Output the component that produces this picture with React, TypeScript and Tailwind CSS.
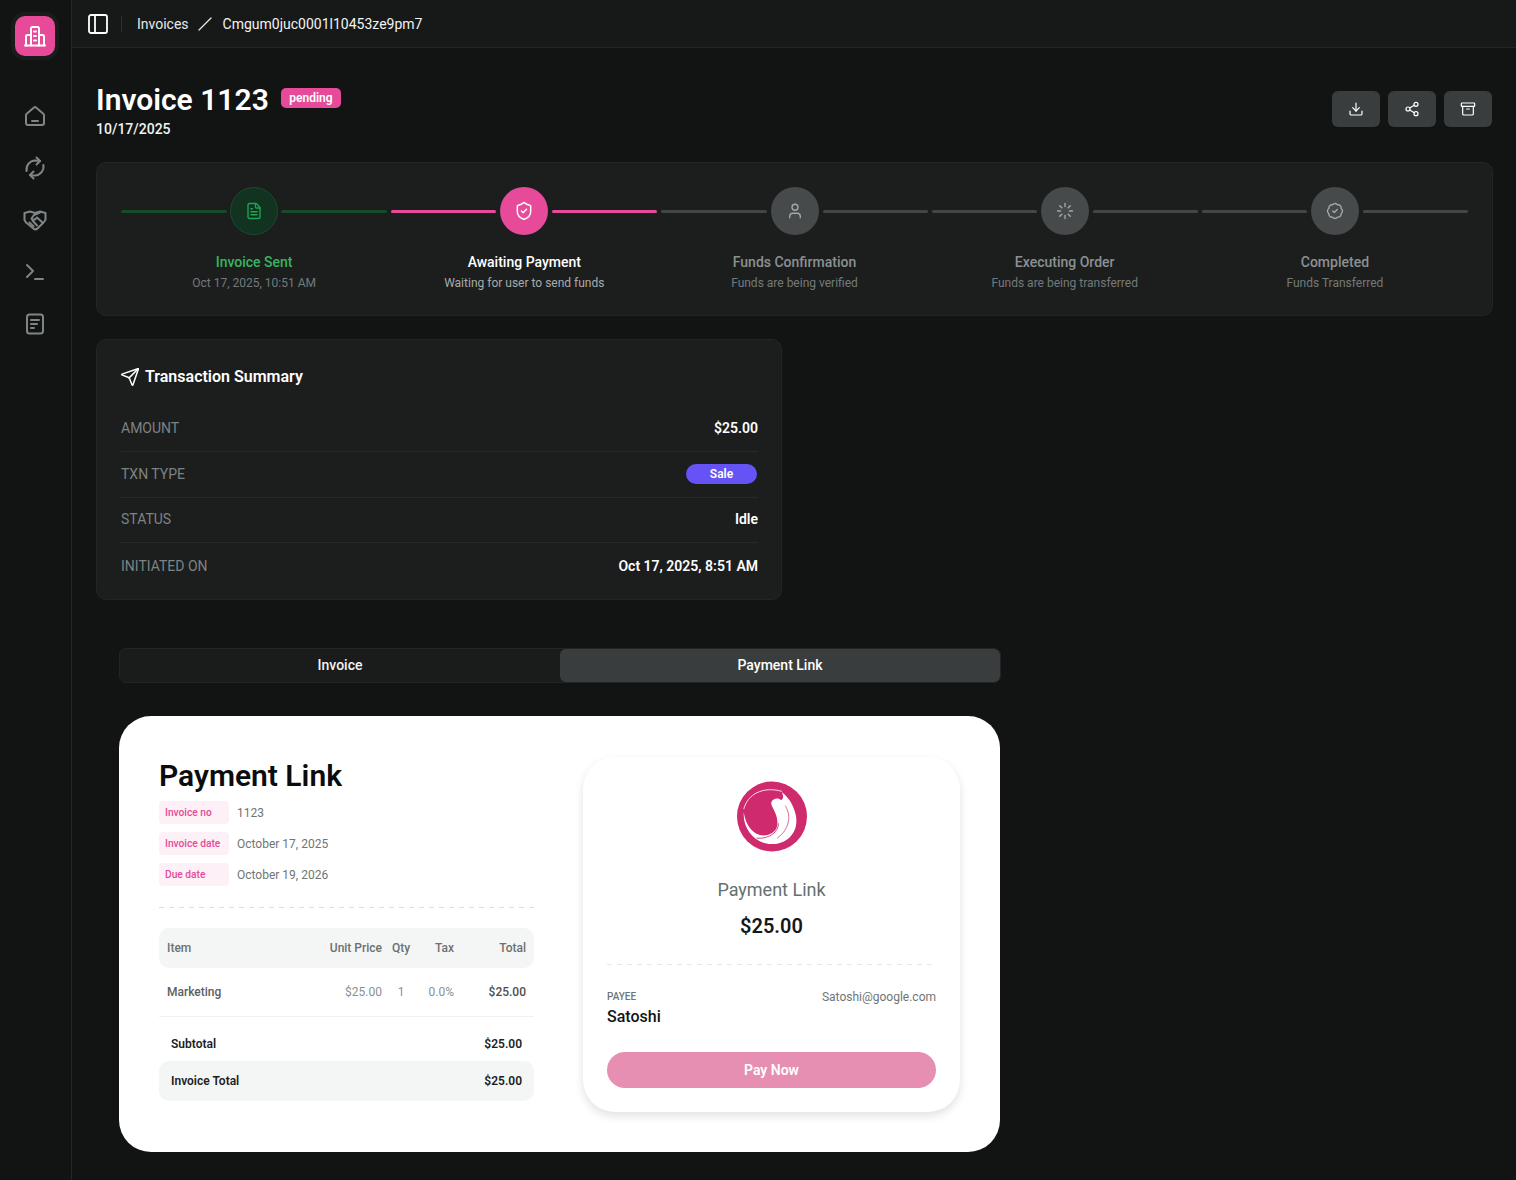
import React from 'react';
import {
  Archive,
  BadgeCheck,
  Download,
  FileText,
  Loader,
  PanelLeft,
  Send,
  Share2,
  ShieldCheck,
  Terminal,
  User,
} from 'lucide-react';

const steps = [
  { title: 'Invoice Sent', sub: 'Oct 17, 2025, 10:51 AM', state: 'done', icon: FileText },
  { title: 'Awaiting Payment', sub: 'Waiting for user to send funds', state: 'active', icon: ShieldCheck },
  { title: 'Funds Confirmation', sub: 'Funds are being verified', state: 'todo', icon: User },
  { title: 'Executing Order', sub: 'Funds are being transferred', state: 'todo', icon: Loader },
  { title: 'Completed', sub: 'Funds Transferred', state: 'todo', icon: BadgeCheck },
];

function BuildingIcon() {
  return (
    <svg width="24" height="24" viewBox="0 0 24 24" fill="none" stroke="currentColor" strokeWidth="2" strokeLinecap="round" strokeLinejoin="round">
      <path d="M2 21.500h20" />
      <path d="M8 21.500V4.500A1.500 1.500 0 0 1 9.500 3h5A1.500 1.500 0 0 1 16 4.500v17" />
      <path d="M8 11H4.500A1.500 1.500 0 0 0 3 12.500v9" />
      <path d="M16 11h3.500a1.500 1.500 0 0 1 1.500 1.500v9" />
      <path d="M11 7.500h2M11 12h2M11 16.500h2" />
    </svg>
  );
}

function HomeIcon() {
  return (
    <svg width="24" height="24" viewBox="0 0 24 24" fill="none" stroke="currentColor" strokeWidth="2" strokeLinecap="round" strokeLinejoin="round">
      <path d="M3 11.200a2 2 0 0 1 .7-1.500l7-6a2 2 0 0 1 2.600 0l7 6a2 2 0 0 1 .7 1.500V19a2 2 0 0 1-2 2H5a2 2 0 0 1-2-2z" />
      <path d="M9 17h6" />
    </svg>
  );
}

function SyncIcon() {
  return (
    <svg width="24" height="24" viewBox="0 0 24 24" fill="none" stroke="currentColor" strokeWidth="2" strokeLinecap="round" strokeLinejoin="round">
      <path d="M3.600 15A9 9 0 0 1 12 4.500c2 0 3.500.3 5 .5" />
      <path d="M13.500 1.500 17 5l-3.500 3.500" />
      <path d="M20.400 9A9 9 0 0 1 12 19.500c-2 0-3.500-.3-5-.5" />
      <path d="M10.500 15.500 7 19l3.500 3.500" />
    </svg>
  );
}

function HandshakeIcon() {
  return (
    <svg width="24" height="24" viewBox="0 0 24 24" fill="none" stroke="currentColor" strokeWidth="2" strokeLinecap="round" strokeLinejoin="round">
      <path d="M12 5 7 3.500 1.500 5v7l1.500 2.500 8 6.500 1.500.5 2-1 6-6 2-2.500V5L17 3.500z" />
      <path d="M17 4.500 11 7 8.500 10.500c1 1.500 3 1.500 4 .5l1.500-1.500 6 5.500" />
      <path d="M6.500 14.500l4 4M9.500 12.500l4.500 5" />
    </svg>
  );
}

function DocIcon() {
  return (
    <svg width="24" height="24" viewBox="0 0 24 24" fill="none" stroke="currentColor" strokeWidth="2" strokeLinecap="round" strokeLinejoin="round">
      <rect x="4" y="2.500" width="16" height="19" rx="2.500" />
      <path d="M8 8h8M8 12h6M8 16h3" />
    </svg>
  );
}

function BrandLogo() {
  return (
    <svg width="70" height="71" viewBox="54 37 206 206">
      <circle cx="157" cy="140" r="103" fill="#cf2a6e" />
      <path
        d="M74 128C70 180 112 224 160 221C210 218 238 178 226 132C220 106 206 84 186 68C192 82 190 88 184 92C176 84 160 86 155 98C152 112 178 132 172 168C168 190 136 204 110 190C90 178 78 155 74 128Z"
        fill="#ffffff"
      />
      <path d="M74 118C85 75 130 50 186 66" fill="none" stroke="#ffffff" strokeWidth="2.500" />
      <path d="M196 108C216 140 206 180 172 204" fill="none" stroke="#cf2a6e" strokeWidth="2" />
      <path d="M176 160C176 186 150 206 112 204" fill="none" stroke="#cf2a6e" strokeWidth="2.500" />
    </svg>
  );
}

function Step({ step }: { step: (typeof steps)[number] }) {
  const Icon = step.icon;
  const lineColor =
    step.state === 'done' ? 'bg-[#17492b]' : step.state === 'active' ? 'bg-[#e64a98]' : 'bg-[#434646]';
  const circle =
    step.state === 'done'
      ? 'mx-[3px] bg-[#11331f] border border-[#1b4a2e] text-[#22a356]'
      : step.state === 'active'
        ? 'mx-[4px] bg-[#e64a98] text-white'
        : 'mx-[4px] bg-[#474a4a] text-[#a3a8a8]';
  const titleColor =
    step.state === 'done' ? 'text-[#37b45f]' : step.state === 'active' ? 'text-white' : 'text-[#8b9191]';
  const subColor = step.state === 'active' ? 'text-[#a6abab]' : 'text-[#747a7a]';

  return (
    <div className="flex flex-col items-center">
      <div className="flex w-full items-center px-[2px]">
        <div className={`h-[3px] flex-1 rounded-full ${lineColor}`} />
        <div className={`flex h-12 w-12 shrink-0 items-center justify-center rounded-full ${circle}`}>
          <Icon size={step.state === 'active' ? 20 : 18} strokeWidth={1.8} />
        </div>
        <div className={`h-[3px] flex-1 rounded-full ${lineColor}`} />
      </div>
      <div className={`mt-[17px] text-[14px] leading-[20px] font-medium ${titleColor}`}>{step.title}</div>
      <div className={`mt-[1px] text-[12px] leading-[20px] ${subColor}`}>{step.sub}</div>
    </div>
  );
}

function SummaryRow({ label, children, last }: { label: string; children: React.ReactNode; last?: boolean }) {
  return (
    <div className={`flex h-[45.600px] items-center justify-between ${last ? '' : 'border-b border-[#272a2a]'}`}>
      <span className="text-[14px] text-[#7d8383]">{label}</span>
      {children}
    </div>
  );
}

function MetaRow({ label, value }: { label: string; value: string }) {
  return (
    <div className="flex items-center gap-2">
      <span className="flex h-[23px] w-[70px] items-center rounded-[4px] bg-[#fdf0f6] pl-[6px] text-[10.200px] font-medium text-[#e64a98]">
        {label}
      </span>
      <span className="text-[12px] text-[#6f7575]">{value}</span>
    </div>
  );
}

export default function App() {
  return (
    <div className="flex h-[1180px] w-[1516px] overflow-hidden bg-[#121414] font-['Roboto',sans-serif] text-white">
      {/* Sidebar */}
      <aside className="flex w-[72px] shrink-0 flex-col items-center border-r border-[#232626] pr-[2px]">
        <div className="mt-[12px] rounded-[14px] bg-[#1a1c1c] p-[4px]">
          <div className="flex h-10 w-10 items-center justify-center rounded-[10px] bg-[#e64a98] text-white">
            <BuildingIcon />
          </div>
        </div>
        <div className="mt-[44px] flex flex-col items-center gap-[28px] text-[#7f8585]">
          <HomeIcon />
          <SyncIcon />
          <HandshakeIcon />
          <Terminal size={24} strokeWidth={2} />
          <DocIcon />
        </div>
      </aside>

      <div className="flex min-w-0 flex-1 flex-col">
        {/* Top bar */}
        <header className="flex h-[48px] shrink-0 items-center border-b border-[#232626] bg-[#171919] pt-[1px] pl-[14px]">
          <PanelLeft size={24} strokeWidth={1.800} className="text-white" />
          <div className="mr-[15px] ml-[11px] h-[16px] w-px bg-[#2c2f2f]" />
          <span className="text-[14px] text-[#e8eaea]">Invoices</span>
          <svg width="16" height="16" viewBox="0 0 16 16" className="mr-[10px] ml-[8px] text-[#e8eaea]">
            <path d="M2 14 14 2" stroke="currentColor" strokeWidth="1.200" strokeLinecap="round" />
          </svg>
          <span className="text-[14px] text-[#f2f3f3]">Cmgum0juc0001l10453ze9pm7</span>
        </header>

        <main className="pr-[23px] pl-[24px]">
          {/* Title */}
          <div className="flex items-start justify-between pt-[34px]">
            <div>
              <div className="flex items-center gap-3">
                <h1 className="text-[30px] leading-[36px] font-semibold">Invoice 1123</h1>
                <span className="mb-[4px] rounded-[5px] bg-[#e64a98] px-[8.500px] text-[12px] leading-[20px] font-semibold">
                  pending
                </span>
              </div>
              <div className="mt-[1px] text-[14px] leading-[20px] font-medium text-[#f2f3f3]">10/17/2025</div>
            </div>
            <div className="mt-[9px] mr-[1px] flex gap-2">
              {[Download, Share2, Archive].map((Icon, i) => (
                <button
                  key={i}
                  className="flex h-[36px] w-[48px] items-center justify-center rounded-[6px] bg-[#3a3d3d] text-white"
                >
                  <Icon size={16} strokeWidth={1.8} />
                </button>
              ))}
            </div>
          </div>

          {/* Stepper */}
          <section className="mt-[23px] grid h-[154px] grid-cols-5 rounded-[10px] border border-[#222525] bg-[#1c1e1e] px-[22px] pt-[24px]">
            {steps.map((step) => (
              <Step key={step.title} step={step} />
            ))}
          </section>

          {/* Summary */}
          <section className="mt-[23px] h-[261px] w-[686px] rounded-[10px] border border-[#222525] bg-[#1c1e1e] pr-[23px] pl-[24px]">
            <div className="flex items-center gap-[5px] pt-[26px] pb-[20px]">
              <Send size={20} strokeWidth={1.8} className="-ml-[1px] text-white" />
              <h2 className="text-[16px] leading-[22px] font-semibold">Transaction Summary</h2>
            </div>
            <div className="-mt-[1.500px]">
              <SummaryRow label="AMOUNT">
                <span className="text-[14px] font-semibold">$25.00</span>
              </SummaryRow>
              <SummaryRow label="TXN TYPE">
                <span className="mr-[1px] flex h-[20px] w-[71px] items-center justify-center rounded-full bg-[#6553f5] text-[12px] font-semibold">
                  Sale
                </span>
              </SummaryRow>
              <SummaryRow label="STATUS">
                <span className="text-[14px] font-semibold">Idle</span>
              </SummaryRow>
              <SummaryRow label="INITIATED ON" last>
                <span className="text-[14px] font-semibold">Oct 17, 2025, 8:51 AM</span>
              </SummaryRow>
            </div>
          </section>

          <div className="ml-[23px] w-[881px]">
            {/* Tabs */}
            <div className="mt-[48px] grid h-[35px] w-[882px] grid-cols-2 rounded-[7px] border border-[#222525] bg-[#1a1c1c]">
              <div className="flex items-center justify-center text-[14px] font-medium text-[#f2f3f3]">Invoice</div>
              <div className="flex items-center justify-center rounded-[6px] bg-[#3a3d3d] text-[14px] font-medium text-white">
                Payment Link
              </div>
            </div>

            {/* Payment link card */}
            <div className="mt-[33px] flex h-[436px] justify-between rounded-[32px] bg-white px-[40px] pt-[40px] text-[#0d0f0f]">
              <div className="mt-[1px] w-[375px]">
                <h2 className="text-[30px] leading-[38px] font-semibold text-[#0b0d0d]">Payment Link</h2>
                <div className="mt-[6px] flex flex-col gap-[8px]">
                  <MetaRow label="Invoice no" value="1123" />
                  <MetaRow label="Invoice date" value="October 17, 2025" />
                  <MetaRow label="Due date" value="October 19, 2026" />
                </div>
                <div className="mt-[21px] h-px bg-[repeating-linear-gradient(90deg,#dcdede_0_5px,transparent_5px_10px)]" />

                <div className="mt-[20px] grid h-[40px] grid-cols-[125px_90px_38px_34px_72px] items-center rounded-[10px] bg-[#f4f5f5] px-[8px] text-[12px] font-medium text-[#6b7171]">
                  <span>Item</span>
                  <span className="text-right">Unit Price</span>
                  <span className="text-center">Qty</span>
                  <span className="text-right">Tax</span>
                  <span className="text-right">Total</span>
                </div>
                <div className="grid h-[49px] grid-cols-[125px_90px_38px_34px_72px] items-center border-b border-[#f0f1f1] px-[8px] text-[12px] text-[#8a9090]">
                  <span className="font-medium text-[#5b6161]">Marketing</span>
                  <span className="text-right">$25.00</span>
                  <span className="text-center">1</span>
                  <span className="text-right">0.0%</span>
                  <span className="text-right font-medium text-[#4a4f4f]">$25.00</span>
                </div>
                <div className="mt-[10px] flex h-[34px] items-center justify-between px-[12px] text-[12px] font-semibold text-[#1c1f1f]">
                  <span>Subtotal</span>
                  <span>$25.00</span>
                </div>
                <div className="flex h-[40px] items-center justify-between rounded-[10px] bg-[#f4f5f5] px-[12px] text-[12px] font-semibold text-[#1c1f1f]">
                  <span>Invoice Total</span>
                  <span>$25.00</span>
                </div>
              </div>

              <div className="mt-[1px] h-[355px] w-[377px] rounded-[32px] bg-white px-[24px] pt-[24px] shadow-[0_4px_10px_rgba(0,0,0,0.12)]">
                <div className="flex justify-center">
                  <BrandLogo />
                </div>
                <div className="mt-[24px] text-center text-[18px] leading-[28px] text-[#667070]">Payment Link</div>
                <div className="mt-[8px] text-center text-[20px] leading-[28px] font-semibold text-[#15181a]">$25.00</div>
                <div className="mt-[24px] mr-[4px] h-px bg-[repeating-linear-gradient(90deg,#e6e8e8_0_5px,transparent_5px_10px)]" />
                <div className="mt-[25px] flex items-start justify-between">
                  <div>
                    <div className="text-[10px] leading-[14px] font-medium text-[#6f7575]">PAYEE</div>
                    <div className="mt-[1px] text-[16px] leading-[24px] font-medium text-[#111414]">Satoshi</div>
                  </div>
                  <span className="text-[12px] leading-[14px] text-[#6f7575]">Satoshi@google.com</span>
                </div>
                <button className="mt-[23px] flex h-[36px] w-full items-center justify-center rounded-full bg-[#e68fb3] text-[14px] font-semibold text-white">
                  Pay Now
                </button>
              </div>
            </div>
          </div>
        </main>
      </div>
    </div>
  );
}
